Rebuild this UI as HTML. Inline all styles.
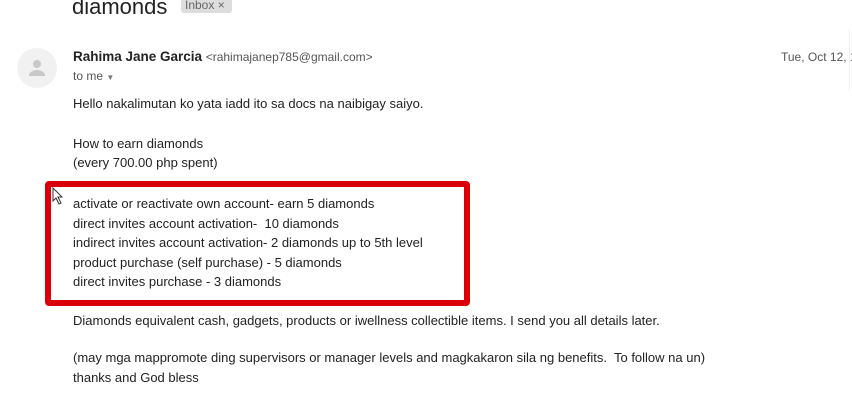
<!DOCTYPE html>
<html><head><style>
body{margin:0;width:852px;height:404px;background:#fff;overflow:hidden;position:relative;font-family:"Liberation Sans",Arial,sans-serif;}
.a{position:absolute;white-space:nowrap;}
.t{font-size:13px;color:#222;line-height:16px;}
</style></head><body>
<div class="a" style="left:72px;top:-7px;font-size:22px;color:#222;line-height:28px;">diamonds</div>
<div class="a" style="left:181px;top:-2px;width:51px;height:15px;background:#ddd;border-radius:3px;font-size:12px;color:#666;line-height:14px;padding-left:4px;box-sizing:border-box;">Inbox ×</div>
<div class="a" style="left:17px;top:48px;width:40px;height:40px;border-radius:50%;background:#f1f1f1;">
<svg width="40" height="40" viewBox="0 0 40 40"><circle cx="20" cy="16" r="4" fill="#c8c8c8"/><path d="M12 27c0-3 5-5 8-5s8 2 8 5v1H12z" fill="#c8c8c8"/></svg></div>
<div class="a t" style="left:73px;top:49px;"><b style="color:#222;font-size:13.5px">Rahima Jane Garcia</b> <span style="font-size:12px;color:#555">&lt;rahimajanep785@gmail.com&gt;</span></div>
<div class="a" style="left:781px;top:50px;font-size:12px;color:#555;">Tue, Oct 12, 1</div>
<div class="a" style="left:849px;top:30px;width:1px;height:60px;background:#eee"></div>
<div class="a" style="left:73px;top:69px;font-size:12px;color:#555;">to me <span style="font-size:8px;color:#777">▼</span></div>
<div class="a t" style="left:73px;top:96px;">Hello nakalimutan ko yata iadd ito sa docs na naibigay saiyo.</div>
<div class="a t" style="left:73px;top:136px;">How to earn diamonds</div>
<div class="a t" style="left:73px;top:155px;">(every 700.00 php spent)</div>
<div class="a" style="left:45px;top:181px;width:425px;height:125px;border:6px solid #d9000a;border-radius:4px;box-sizing:border-box;"></div>
<div class="a t" style="left:73px;top:194px;line-height:19.5px;">activate or reactivate own account- earn 5 diamonds<br>direct invites account activation-&nbsp; 10 diamonds<br>indirect invites account activation- 2 diamonds up to 5th level<br>product purchase (self purchase) - 5 diamonds<br>direct invites purchase - 3 diamonds</div>
<svg class="a" style="left:52px;top:187px" width="12" height="18" viewBox="0 0 12 18"><path d="M1 1v13l3-3 3 6 2-1-3-6h4z" fill="#fff" stroke="#333" stroke-width="1"/></svg>
<div class="a t" style="left:73px;top:313px;">Diamonds equivalent cash, gadgets, products or iwellness collectible items. I send you all details later.</div>
<div class="a t" style="left:73px;top:350px;">(may mga mappromote ding supervisors or manager levels and magkakaron sila ng benefits.&nbsp; To follow na un)</div>
<div class="a t" style="left:73px;top:370px;">thanks and God bless</div>
</body></html>
